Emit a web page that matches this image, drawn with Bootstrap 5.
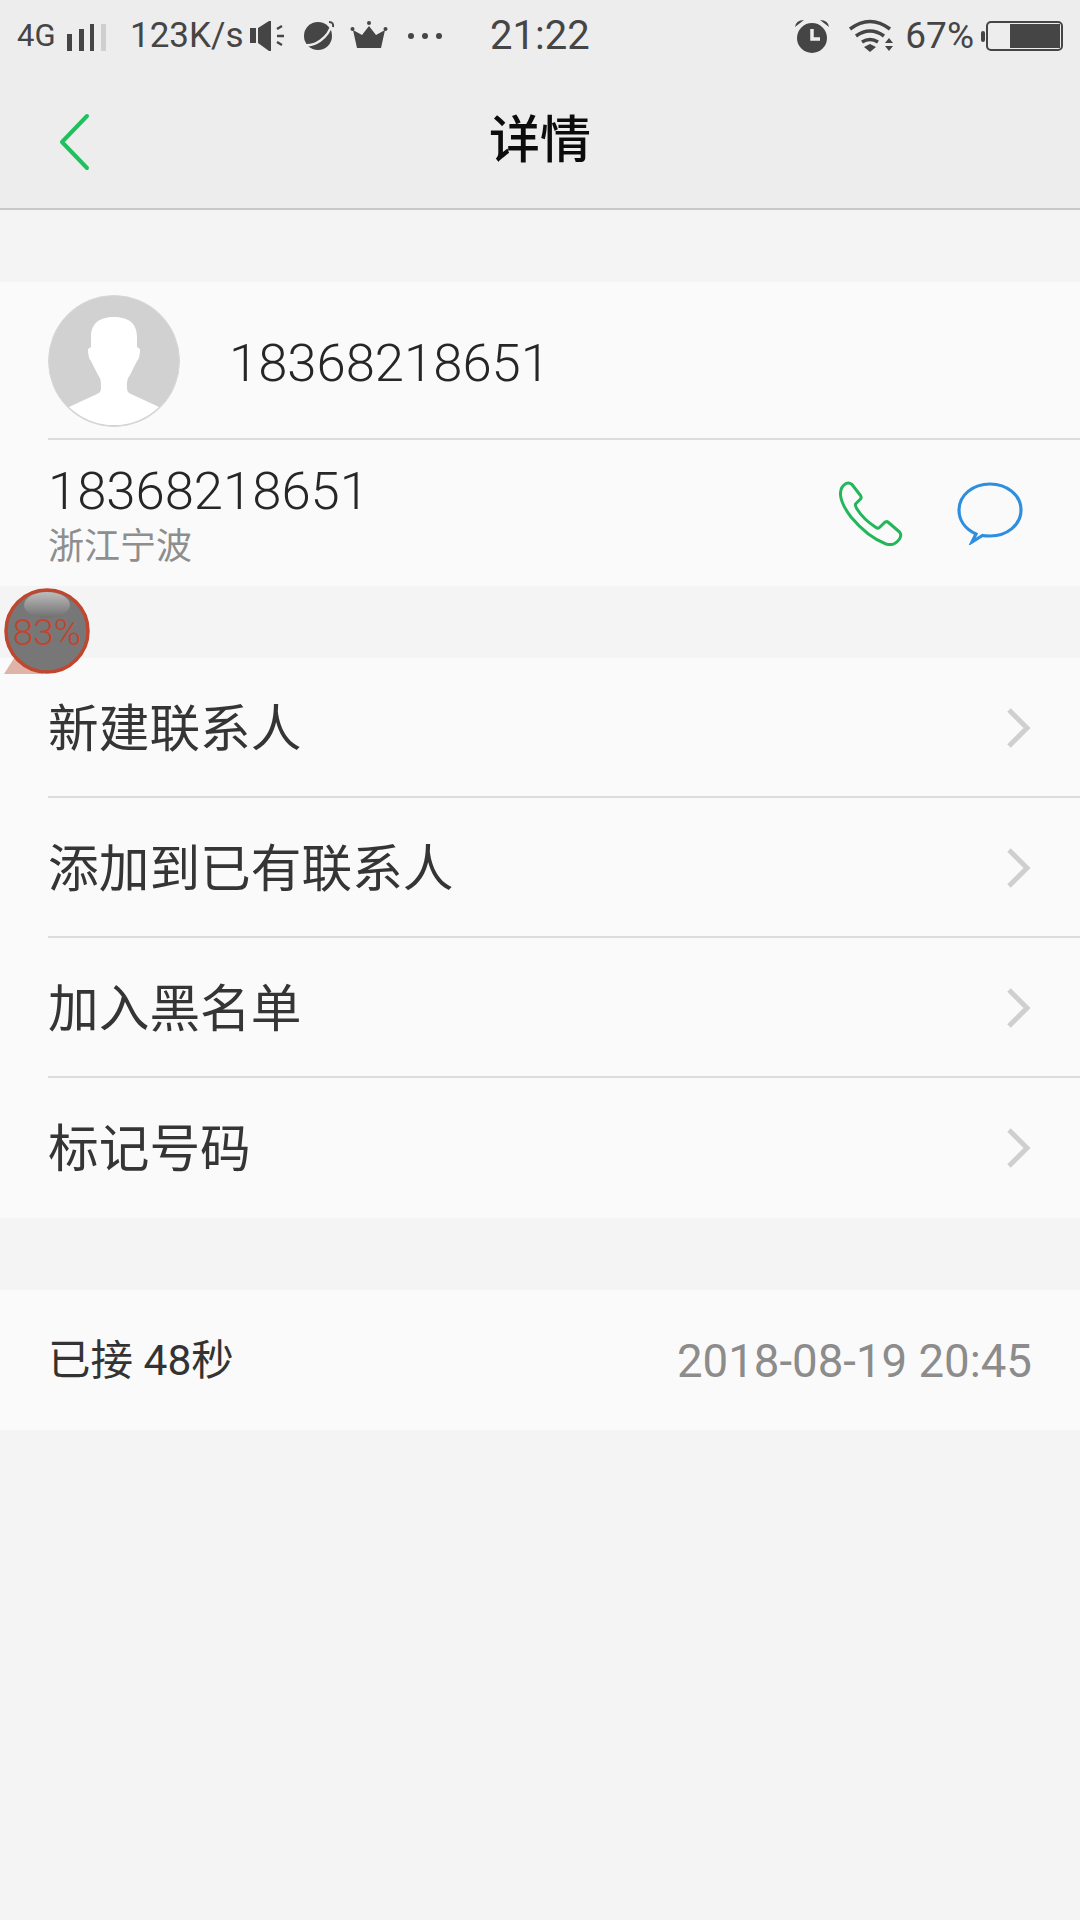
<!DOCTYPE html>
<html lang="zh-CN">
<head>
<meta charset="utf-8">
<title>详情</title>
<link href="https://cdn.jsdelivr.net/npm/bootstrap@5.3.0/dist/css/bootstrap.min.css" rel="stylesheet">
<style>
html,body{margin:0;background:#f4f4f4;}
body{width:1080px;height:1920px;overflow:hidden;position:relative;font-family:Roboto,"Noto Sans CJK SC",sans-serif;color:#333;}
.topbar{background:#ededed;height:210px;border-bottom:2px solid #c9c9c9;}
.statusrow{height:72px;color:#454545;padding:0 17px;position:relative;}
.st-text{font-size:35px;line-height:76px;white-space:nowrap;}
.st-pct{font-size:37px;line-height:76px;white-space:nowrap;}
.st-small{font-size:31px;line-height:74px;}
.st-clock{font-size:40px;line-height:78px;}
.titlerow{height:136px;position:relative;}
.titletext{font-size:51px;font-weight:500;color:#0c0c0c;line-height:1;}
.backlink{position:absolute;left:58px;top:41px;line-height:0;}
.sheet{background:#fafafa;}
.gap-one{height:72px;}
.headrow{height:156px;padding-left:48px;}
.bigno{font-size:52.6px;font-weight:300;color:#262626;line-height:1;}
.avatarwrap{width:132px;height:132px;margin-right:49px;margin-top:2px;line-height:0;}
.numrow{height:146px;padding:0 57px 0 48px;}
.rule{height:2px;background:#dcdcdc;margin-left:48px;}
.place{font-size:36px;color:#8e8e8e;line-height:1;margin-top:12px;}
.itemrow{height:140px;padding:0 48px;font-size:50.7px;color:#353535;}
.itemlabel{position:relative;top:2px;}
.itemrule{box-shadow:inset 0 -2px 0 #dcdcdc;}
.itemwrap{margin-left:48px;}
.calltext{font-size:42.500px;color:#333;position:relative;top:1px;}
.calldate{font-size:45.6px;color:#8c8c8c;position:relative;top:2px;}
.floatball{position:absolute;left:2px;top:586px;line-height:0;}
.balltext{position:absolute;left:0;top:28px;width:90px;text-align:center;font-size:37px;line-height:1;color:#c0452e;font-weight:300;}
</style>
</head>
<body>
<div class="topbar">
  <div class="statusrow d-flex align-items-center">
    <span class="st-small" style="width:41px">4G</span>
    <svg class="ms-2" width="42" height="32" viewBox="0 0 42 32"><path fill="#454545" d="M10 14v17h5V14zM22 9v22h5V9zM33 4v27h4V4z" transform="translate(-9 0)"/><rect x="35" y="4" width="5" height="27" fill="#cfcfcf"/></svg>
    <span class="st-text" style="margin-left:22px;width:112px">123K/s</span>
    <svg style="margin-left:7px" width="36" height="32" viewBox="0 0 36 32"><path fill="#454545" d="M1 8h6v15H1zM9 8l11-7h2v30h-2L9 23z"/><path stroke="#454545" stroke-width="2.400" fill="none" d="M28 9l5-3M28 16h7M28 22l5 3"/></svg>
    <svg style="margin-left:16px" width="34" height="34" viewBox="0 0 34 34"><circle cx="17" cy="17" r="14" fill="#454545"/><path d="M2 26C14 28 27 19 31 5" fill="none" stroke="#ededed" stroke-width="2.400"/><path d="M28 3q5 0 4 5" fill="none" stroke="#454545" stroke-width="2"/></svg>
    <svg style="margin-left:15px" width="38" height="30" viewBox="0 0 38 30"><path fill="#454545" d="M3 9l9 5 7-9 7 9 9-5-4 18H7z"/><circle cx="2.500" cy="8" r="2" fill="#454545"/><circle cx="19" cy="2" r="2" fill="#454545"/><circle cx="35.500" cy="8" r="2" fill="#454545"/></svg>
    <svg style="margin-left:19px" width="36" height="10" viewBox="0 0 36 10"><circle cx="4" cy="5" r="3" fill="#454545"/><circle cx="18" cy="5" r="3" fill="#454545"/><circle cx="32" cy="5" r="3" fill="#454545"/></svg>
    <span class="st-clock" style="margin-left:47px;">21:22</span>
    <span class="flex-grow-1"></span>
    <svg width="36" height="36" viewBox="0 0 36 36"><circle cx="18" cy="20" r="15" fill="#454545"/><path d="M18 11v10h8" stroke="#ededed" stroke-width="3.500" fill="none"/><path d="M1 9q1-7 9-7zM35 9q-1-7-9-7z" fill="#454545"/></svg>
    <svg style="margin-left:17px" width="48" height="36" viewBox="0 0 46 36"><path d="M2 11Q22-4 42 11M8 18Q22 8 36 18M14 24q8-5 16 0" fill="none" stroke="#454545" stroke-width="3.500"/><path d="M16 29l6-3 6 3-6 5z" fill="#454545"/><path d="M37 25l4-5 4 5zM37 28l4 5 4-5z" fill="#454545"/></svg>
    <span class="st-pct" style="margin-left:10px">67%</span>
    <svg style="margin-left:7px" width="82" height="32" viewBox="0 0 82 32"><rect x="0" y="11" width="4" height="11" rx="2" fill="#454545"/><rect x="6" y="2" width="75" height="28" rx="4" fill="none" stroke="#454545" stroke-width="2"/><rect x="29" y="4" width="50" height="24" fill="#454545"/></svg>
  </div>
  <div class="titlerow d-flex align-items-center justify-content-center">
    <svg class="backlink" width="32" height="58" viewBox="0 0 32 58"><path d="M29 3L4 29l25 26" fill="none" stroke="#1fc15e" stroke-width="4" stroke-linecap="round" stroke-linejoin="round"/></svg>
    <div class="titletext">详情</div>
  </div>
</div>
<div class="gap-one"></div>
<section class="sheet">
  <div class="headrow d-flex align-items-center">
    <svg class="avatarwrap" viewBox="0 0 132 132"><circle cx="66" cy="66" r="65.500" fill="#d1d1d1"/><path fill="#fff" d="M43 42C43 28 52 22 66 22S89 28 89 42V52L92 54C92 60 91 64 89 66L82 80C79 84 79 86 79 93C79 96 80 98 83 99L111 112A65 65 0 0 1 21 112L49 99C52 98 53 96 53 93C53 86 53 84 50 80L43 66C41 64 40 60 40 54L43 52Z"/><circle cx="66" cy="66" r="65.500" fill="none" stroke="#d8d8d8" stroke-width="1"/></svg>
    <div class="bigno" style="position:relative;top:3px">18368218651</div>
  </div>
  <div class="rule"></div>
  <div class="numrow d-flex align-items-center justify-content-between">
    <div style="padding-top:4px">
      <div class="bigno">18368218651</div>
      <div class="place">浙江宁波</div>
    </div>
    <div class="d-flex align-items-center">
      <svg width="66" height="66" viewBox="0 -2 66 66"><path d="M7 1.500Q10 0 13 2.500L21.500 13.500Q23 16 21 17.500L16.500 22Q16 24 18 27C23 35 30 41 37 45.500Q39 47 41 45L45 41Q47 38.500 49.500 40.500L60.500 50Q63 53 60.500 57C57 62 52 63.500 47 62C35 57.500 22 47 12 35C6 27 2 20 1.500 13Q1 5 7 1.500Z" fill="none" stroke="#23b65a" stroke-width="3" stroke-linejoin="round"/></svg>
      <svg style="margin-left:52px" width="66" height="64" viewBox="0 0 66 64"><path d="M33 3C50 3 64 14 64 29S50 55 33 55C30 55 28 55 25.500 54.500L15 61L19 53C8 48 2 39 2 29C2 14 16 3 33 3Z" fill="none" stroke="#2f8fdf" stroke-width="3.200"/></svg>
    </div>
  </div>
</section>
<div class="gap-one"></div>
<section class="sheet">
  <div class="itemwrap">
    <div class="itemrow itemrule d-flex align-items-center justify-content-between" style="padding-left:0"><span class="itemlabel">新建联系人</span><svg width="26" height="42" viewBox="0 0 26 42"><path d="M3 3l18 18L3 39" fill="none" stroke="#cfcfcf" stroke-width="5"/></svg></div>
    <div class="itemrow itemrule d-flex align-items-center justify-content-between" style="padding-left:0"><span class="itemlabel">添加到已有联系人</span><svg width="26" height="42" viewBox="0 0 26 42"><path d="M3 3l18 18L3 39" fill="none" stroke="#cfcfcf" stroke-width="5"/></svg></div>
    <div class="itemrow itemrule d-flex align-items-center justify-content-between" style="padding-left:0"><span class="itemlabel">加入黑名单</span><svg width="26" height="42" viewBox="0 0 26 42"><path d="M3 3l18 18L3 39" fill="none" stroke="#cfcfcf" stroke-width="5"/></svg></div>
    <div class="itemrow d-flex align-items-center justify-content-between" style="padding-left:0"><span class="itemlabel">标记号码</span><svg width="26" height="42" viewBox="0 0 26 42"><path d="M3 3l18 18L3 39" fill="none" stroke="#cfcfcf" stroke-width="5"/></svg></div>
  </div>
</section>
<div class="gap-one"></div>
<section class="sheet">
  <div class="itemrow d-flex align-items-center justify-content-between">
    <span class="calltext">已接 48秒</span>
    <span class="calldate">2018-08-19 20:45</span>
  </div>
</section>
<div class="floatball">
  <svg width="90" height="92" viewBox="0 0 90 92"><defs><linearGradient id="gloss" x1="0" y1="0" x2="0" y2="1"><stop offset="0" stop-color="#bdbdbd"/><stop offset="1" stop-color="#6f6f6f"/></linearGradient></defs><path d="M2 88l14-22 26 22z" fill="#e0b3a8"/><circle cx="45" cy="45" r="41" fill="#777" stroke="#c0472f" stroke-width="3.500"/><ellipse cx="45" cy="19" rx="23" ry="13" fill="url(#gloss)"/></svg>
  <div class="balltext">83%</div>
</div>
</body>
</html>
